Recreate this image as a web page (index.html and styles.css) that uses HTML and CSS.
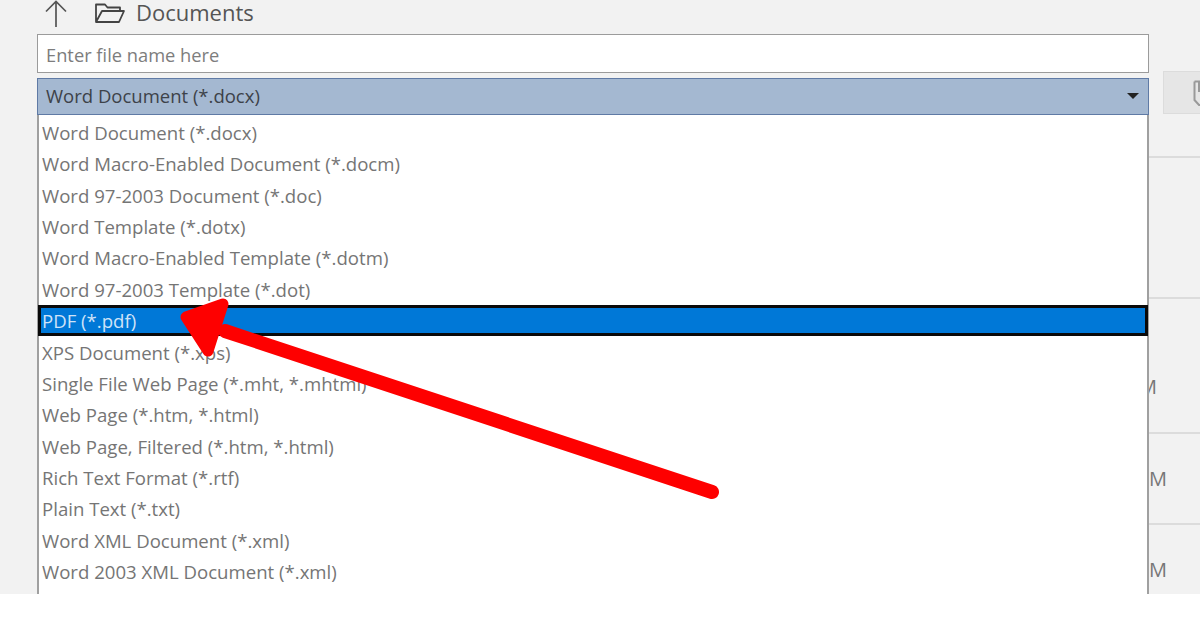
FILE: index.html
```html
<!DOCTYPE html>
<html lang="en">
<head>
  <meta charset="UTF-8" />
  <meta name="viewport" content="width=device-width, initial-scale=1.0"/>
  <title>Save As</title>
  <link rel="stylesheet" href="styles.css">
</head>
<body>

  <div class="dialog">
    <div class="main">
      <!-- PATH -->
      <div class="path-row">
        <svg class="icon-up" width="24" height="28" viewBox="0 0 24 28">
          <path d="M12 27V2M2 11.500L12 1.500L22 11.500" fill="none" stroke="#555" stroke-width="1.700"/>
        </svg>
        <svg class="icon-folder" width="32" height="24" viewBox="0 0 32 24">
          <path d="M2 21V3.500H11L13.500 6.500H26V10M2 21H25L30 10H8L2 21Z" fill="none" stroke="#444" stroke-width="1.800" stroke-linejoin="round"/>
        </svg>
        <span class="path-name">Documents</span>
      </div>

      <div class="file-name">Enter file name here</div>

      <div class="file-type">
        <span>Word Document (*.docx)</span>
        <span class="caret"></span>
      </div>

      <!-- DROPDOWN -->
      <ul class="type-list">
        <li>Word Document (*.docx)</li>
        <li>Word Macro-Enabled Document (*.docm)</li>
        <li>Word 97-2003 Document (*.doc)</li>
        <li>Word Template (*.dotx)</li>
        <li>Word Macro-Enabled Template (*.dotm)</li>
        <li>Word 97-2003 Template (*.dot)</li>
        <li class="selected">PDF (*.pdf)</li>
        <li>XPS Document (*.xps)</li>
        <li>Single File Web Page (*.mht, *.mhtml)</li>
        <li>Web Page (*.htm, *.html)</li>
        <li>Web Page, Filtered (*.htm, *.html)</li>
        <li>Rich Text Format (*.rtf)</li>
        <li>Plain Text (*.txt)</li>
        <li>Word XML Document (*.xml)</li>
        <li>Word 2003 XML Document (*.xml)</li>
      </ul>
    </div>

    <!-- RIGHT SIDE -->
    <div class="side">
      <div class="save-area">
        <div class="save-btn">
          <svg width="20" height="26" viewBox="0 0 20 26">
            <path d="M1.500 1.500H18V26M1.500 1.500V20L6 25H18M6 1.500V11H14V1.500" fill="none" stroke="#9a9a9a" stroke-width="2"/>
          </svg>
        </div>
      </div>
      <div class="side-row row-a"></div>
      <div class="side-row row-b"><span class="time">PM</span></div>
      <div class="side-row row-c"><span class="time">PM</span></div>
      <div class="side-row row-d"><span class="time">PM</span></div>
    </div>

    <!-- ARROW -->
    <svg class="arrow" width="1200" height="594" viewBox="0 0 1200 594">
      <path d="M712 492L225 331" fill="none" stroke="#fe0000" stroke-width="14" stroke-linecap="round"/>
      <path d="M186 317L223 304L208 351Z" fill="#fe0000" stroke="#fe0000" stroke-width="11" stroke-linejoin="round"/>
    </svg>
  </div>

</body>
</html>
```

FILE: styles.css
```css
body {
  margin: 0;
  background: #fff;
  font-family: 'Open Sans', sans-serif;
  color: #666;
  overflow: hidden;
}

.dialog {
  position: relative;
  display: flex;
  height: 594px;
  padding-left: 37px;
  background: #f2f2f2;
  overflow: hidden;
}

.main {
  display: flex;
  flex-direction: column;
  width: 1112px;
  flex: none;
}

.path-row {
  display: flex;
  align-items: flex-start;
  height: 31px;
  padding-left: 7px;
}

.icon-up {
  margin-right: 26px;
}

.icon-folder {
  margin-top: 1px;
  margin-right: 10px;
}

.path-name {
  font-size: 22px;
  line-height: 25px;
  color: #555;
}

.file-name {
  height: 37px;
  margin-top: 3px;
  padding-left: 8px;
  line-height: 39px;
  font-size: 18.300px;
  color: #7d7d7d;
  background: #fff;
  border: 1px solid #9b9b9b;
}

.file-type {
  display: flex;
  justify-content: space-between;
  align-items: center;
  height: 33px;
  margin-top: 5px;
  padding: 0 9px 2px 8px;
  font-size: 18.500px;
  color: #3d4249;
  background: #a4b8d1;
  border: 1px solid #5f7aa5;
}

.caret {
  width: 0;
  height: 0;
  border-left: 6px solid transparent;
  border-right: 6px solid transparent;
  border-top: 6px solid #222;
}

.type-list {
  flex: 1;
  margin: 0;
  padding: 1.600px 0 0;
  list-style: none;
  background: #fff;
  border-left: 2px solid #a0a0a0;
  border-right: 2px solid #a0a0a0;
}

.type-list li {
  display: flex;
  align-items: center;
  height: 31.400px;
  padding-left: 3px;
  font-size: 18.600px;
  color: #757575;
  white-space: nowrap;
}

.type-list li.selected {
  margin: 0 -1px 0 -1px;
  padding-left: 1px;
  box-sizing: border-box;
  color: #cfe3f8;
  background: #0078d7;
  border: 3px solid #0a0a0a;
}

.side {
  display: flex;
  flex-direction: column;
  flex: 1;
  min-width: 0;
  overflow: hidden;
}

.save-area {
  height: 156px;
  padding: 71px 0 0 14px;
  box-sizing: border-box;
}

.save-btn {
  display: flex;
  align-items: center;
  width: 60px;
  height: 43px;
  padding-left: 29px;
  box-sizing: border-box;
  background: #e6e6e6;
  border: 1px solid #dcdcdc;
}

.side-row {
  display: flex;
  justify-content: flex-end;
  align-items: center;
  box-sizing: border-box;
  border-top: 2px solid #dcdcdc;
}

.row-a {
  height: 141px;
}

.row-b {
  height: 135px;
}

.row-c {
  height: 91px;
}

.row-d {
  height: 71px;
  align-items: flex-start;
  padding-top: 31px;
}

.time {
  font-size: 20px;
  color: #777;
  white-space: nowrap;
}

.row-b .time {
  margin-right: 43px;
  margin-top: 42px;
}

.row-c .time,
.row-d .time {
  margin-right: 33px;
}

.arrow {
  position: absolute;
  top: 0;
  left: 0;
}
```
